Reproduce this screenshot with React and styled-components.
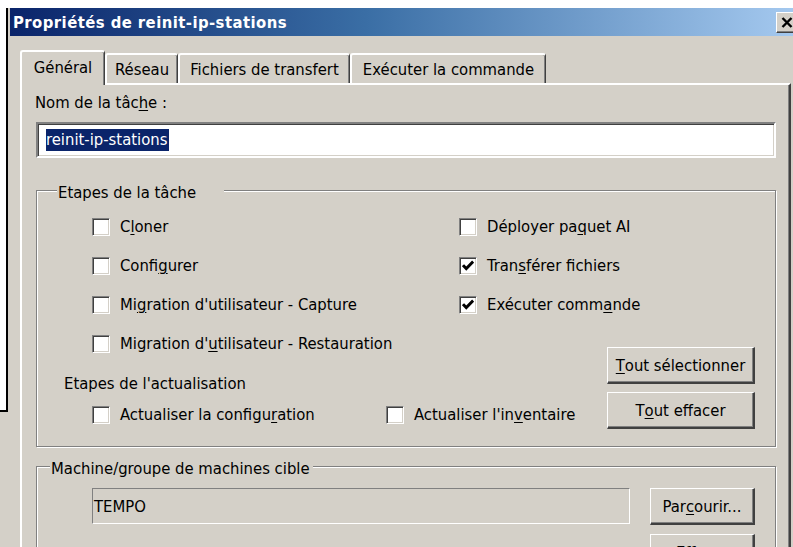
import React from 'react';
import styled, { createGlobalStyle } from 'styled-components';

const FACE = '#d4d0c8';
const SHADOW = '#808080';
const DARK = '#404040';
const LIGHT = '#ffffff';

const GlobalStyle = createGlobalStyle`
  html, body {
    margin: 0;
    padding: 0;
    overflow: hidden;
    background: ${FACE};
  }
  body {
    font-family: "DejaVu Sans Condensed", Tahoma, "DejaVu Sans", sans-serif;
    font-size: 16.5px;
    color: #000;
  }
`;

const Screen = styled.div`
  position: relative;
  width: 793px;
  height: 547px;
  overflow: hidden;
  background: ${FACE};
  display: flex;
  flex-direction: column;
`;

const TopStrip = styled.div`
  flex: none;
  height: 8px;
  background: ${LIGHT};
`;

/* Edge of another window lying over the dialog's left border */
const BackWindow = styled.div`
  position: absolute;
  left: 0;
  top: 8px;
  width: 6px;
  height: 402px;
  background: ${LIGHT};
  border-right: 2px solid #000;
  border-bottom: 2px solid #000;
`;

const Dialog = styled.div`
  flex: none;
  width: 800px;
  padding-left: 10px;
  box-sizing: border-box;
  display: flex;
  flex-direction: column;
`;

const TitleBar = styled.div`
  flex: none;
  height: 28px;
  display: flex;
  align-items: center;
  padding-left: 3px;
  background: linear-gradient(to right, #0a246a 0%, #3a6ea5 45%, #a6caf0 100%);
`;

const Title = styled.div`
  color: ${LIGHT};
  font-weight: bold;
  font-size: 16.5px;
  letter-spacing: 0.45px;
  white-space: nowrap;
`;

const CloseButton = styled.div`
  margin-left: auto;
  margin-right: 2px;
  width: 22px;
  height: 21px;
  box-sizing: border-box;
  background: ${FACE};
  border: 1px solid;
  border-color: ${LIGHT} ${DARK} ${DARK} ${LIGHT};
  box-shadow: inset -1px -1px 0 ${SHADOW};
  display: flex;
  align-items: center;
  justify-content: center;
`;

const DialogBody = styled.div`
  padding: 14px 0 0 10px;
`;

const TabStrip = styled.div`
  display: flex;
  align-items: flex-end;
  height: 33px;
  position: relative;
  z-index: 1;
`;

const Tab = styled.div`
  flex: none;
  width: ${(p) => p.$w}px;
  height: ${(p) => (p.$active ? 35 : 30)}px;
  margin-bottom: ${(p) => (p.$active ? -2 : 0)}px;
  box-sizing: border-box;
  background: ${FACE};
  border-top: 2px solid ${LIGHT};
  border-left: 2px solid ${LIGHT};
  border-right: 1px solid ${DARK};
  box-shadow: inset -1px 0 0 ${SHADOW};
  border-radius: 3px 3px 0 0;
  display: flex;
  align-items: center;
  justify-content: center;
  padding-bottom: ${(p) => (p.$active ? 3 : 0)}px;
  white-space: nowrap;
`;

const Panel = styled.div`
  width: 771px;
  height: 480px;
  box-sizing: border-box;
  border: 2px solid;
  border-color: ${LIGHT} ${DARK} ${DARK} ${LIGHT};
  box-shadow: inset -1px 0 0 ${SHADOW};
  padding: 8px 13px 0 14px;
`;

const FieldLabel = styled.div`
  line-height: 20px;
  margin-left: -1px;
`;

const U = styled.span`
  text-decoration: underline;
  text-underline-offset: 2px;
  text-decoration-thickness: 1px;
`;

const EditBox = styled.div`
  margin-top: 9px;
  height: 36px;
  box-sizing: border-box;
  background: ${LIGHT};
  border: 2px solid;
  border-color: ${SHADOW} ${LIGHT} ${LIGHT} ${SHADOW};
  box-shadow: inset 1px 1px 0 ${DARK}, inset -1px -1px 0 ${FACE};
  padding-left: 8px;
  display: flex;
  align-items: center;
`;

const Selected = styled.span`
  background: #0a246a;
  color: ${LIGHT};
  line-height: 22px;
  padding-right: 2px;
`;

const Group = styled.div`
  position: relative;
  margin-top: ${(p) => p.$mt}px;
  border: 1px solid ${SHADOW};
  box-shadow: inset 1px 1px 0 ${LIGHT}, 1px 1px 0 ${LIGHT};
  padding: ${(p) => p.$pad};
`;

const Legend = styled.div`
  position: absolute;
  top: -9px;
  left: ${(p) => p.$left}px;
  line-height: 22px;
  padding: 0 ${(p) => p.$after}px 0 1px;
  background: ${FACE};
  white-space: nowrap;
`;

const StepsLayout = styled.div`
  display: flex;
  align-items: flex-end;
`;

const LeftArea = styled.div`
  flex: 1;
  min-width: 0;
  display: flex;
  flex-direction: column;
`;

const StepsGrid = styled.div`
  margin-left: 28px;
  display: grid;
  grid-template-columns: 367px auto;
  grid-auto-rows: 39px;
`;

const SubHeading = styled.div`
  margin-top: 10px;
  line-height: 22px;
`;

const UpdateRow = styled.div`
  margin-left: 28px;
  height: 39px;
  display: flex;
  align-items: center;
`;

const CheckRow = styled.label`
  flex: none;
  display: flex;
  align-items: center;
  gap: 10px;
  width: ${(p) => (p.$w ? `${p.$w}px` : 'auto')};
  white-space: nowrap;
`;

const Box = styled.span`
  flex: none;
  width: 18px;
  height: 18px;
  box-sizing: border-box;
  background: ${LIGHT};
  border: 1px solid;
  border-color: ${SHADOW} ${LIGHT} ${LIGHT} ${SHADOW};
  box-shadow: inset 1px 1px 0 ${DARK}, inset -1px -1px 0 ${FACE};
  display: flex;
  align-items: center;
  justify-content: center;
`;

const ButtonColumn = styled.div`
  flex: none;
  display: flex;
  flex-direction: column;
  gap: ${(p) => p.$gap}px;
  margin-bottom: ${(p) => p.$mb || 0}px;
`;

const Button = styled.div`
  flex: none;
  width: ${(p) => p.$w}px;
  height: 37px;
  box-sizing: border-box;
  background: ${FACE};
  border: 1px solid;
  border-color: ${LIGHT} ${DARK} ${DARK} ${LIGHT};
  border-width: 1px 2px 2px 1px;
  box-shadow: inset -1px -1px 0 ${SHADOW};
  display: flex;
  align-items: center;
  justify-content: center;
  white-space: nowrap;
`;

const TargetRow = styled.div`
  display: flex;
  align-items: flex-start;
  gap: 20px;
`;

const StaticField = styled.div`
  flex: none;
  width: 538px;
  height: 36px;
  box-sizing: border-box;
  border: 1px solid;
  border-color: ${SHADOW} ${LIGHT} ${LIGHT} ${SHADOW};
  padding-left: 1px;
  display: flex;
  align-items: center;
`;

const CheckItem = ({ checked, w, children }) => (
  <CheckRow $w={w}>
    <Box>
      {checked && (
        <svg width="12" height="12" viewBox="0 0 7 7">
          <path d="M0.6 3 L2.5 5 L6.5 0.9" fill="none" stroke="#000" strokeWidth="1.7" />
        </svg>
      )}
    </Box>
    <span>{children}</span>
  </CheckRow>
);

const tabs = [
  { label: 'Général', w: 85, active: true },
  { label: 'Réseau', w: 73 },
  { label: 'Fichiers de transfert', w: 172 },
  { label: 'Exécuter la commande', w: 196 },
];

export default function App() {
  return (
    <>
      <GlobalStyle />
      <Screen>
        <TopStrip />
        <Dialog>
          <TitleBar>
            <Title>Propriétés de reinit-ip-stations</Title>
            <CloseButton>
              <svg width="12" height="11" viewBox="0 0 12 11">
                <path d="M1.5 1 L10.5 10 M10.5 1 L1.5 10" stroke="#000" strokeWidth="2.4" />
              </svg>
            </CloseButton>
          </TitleBar>
          <DialogBody>
            <TabStrip>
              {tabs.map((t) => (
                <Tab key={t.label} $w={t.w} $active={t.active}>
                  {t.label}
                </Tab>
              ))}
            </TabStrip>
            <Panel>
              <FieldLabel>
                Nom de la tâc<U>h</U>e :
              </FieldLabel>
              <EditBox>
                <Selected>reinit-ip-stations</Selected>
              </EditBox>

              <Group $mt={32} $pad="16px 20px 12px 27px">
                <Legend $left={20} $after={28}>Etapes de la tâche</Legend>
                <StepsLayout>
                  <LeftArea>
                    <StepsGrid>
                      <CheckItem>
                        C<U>l</U>oner
                      </CheckItem>
                      <CheckItem>
                        Déployer pa<U>q</U>uet AI
                      </CheckItem>
                      <CheckItem>
                        Confi<U>g</U>urer
                      </CheckItem>
                      <CheckItem checked>
                        Tran<U>s</U>férer fichiers
                      </CheckItem>
                      <CheckItem>
                        Mi<U>g</U>ration d'utilisateur - Capture
                      </CheckItem>
                      <CheckItem checked>
                        Exécuter comm<U>a</U>nde
                      </CheckItem>
                      <CheckItem>
                        Migration d'<U>u</U>tilisateur - Restauration
                      </CheckItem>
                    </StepsGrid>
                    <SubHeading>Etapes de l'actualisation</SubHeading>
                    <UpdateRow>
                      <CheckItem w={294}>
                        Actualiser la configu<U>r</U>ation
                      </CheckItem>
                      <CheckItem>
                        Actualiser l'in<U>v</U>entaire
                      </CheckItem>
                    </UpdateRow>
                  </LeftArea>
                  <ButtonColumn $gap={8} $mb={5}>
                    <Button $w={148}>
                      <U>T</U>out sélectionner
                    </Button>
                    <Button $w={148}>
                      T<U>o</U>ut effacer
                    </Button>
                  </ButtonColumn>
                </StepsLayout>
              </Group>

              <Group $mt={19} $pad="21px 20px 20px 55px">
                <Legend $left={13} $after={3}>Machine/groupe de machines cible</Legend>
                <TargetRow>
                  <StaticField>TEMPO</StaticField>
                  <ButtonColumn $gap={9}>
                    <Button $w={105}>
                      Par<U>c</U>ourir...
                    </Button>
                    <Button $w={105}>
                      <U>E</U>ffacer
                    </Button>
                  </ButtonColumn>
                </TargetRow>
              </Group>
            </Panel>
          </DialogBody>
        </Dialog>
        <BackWindow />
      </Screen>
    </>
  );
}
